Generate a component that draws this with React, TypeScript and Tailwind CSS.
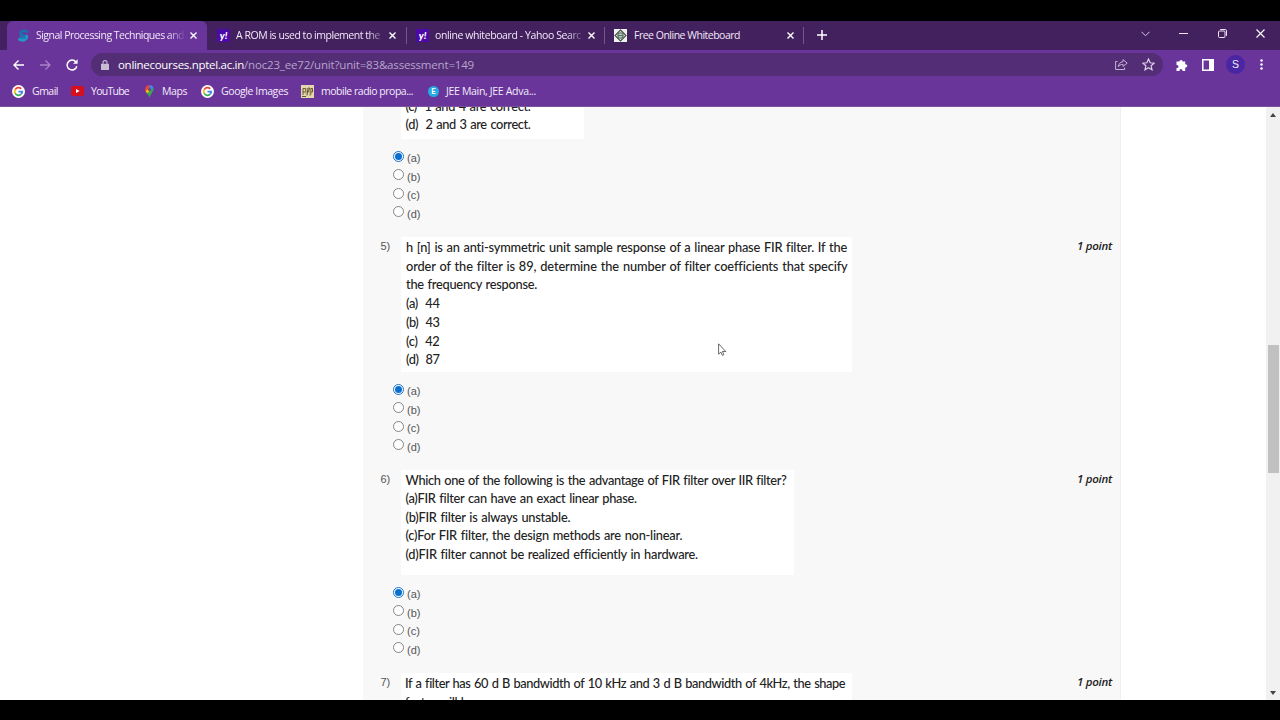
import { useLayoutEffect, useRef, useState } from "react";
import type { ReactNode } from "react";

const UI = "font-['Open_Sans','Noto_Sans',sans-serif]";

/* A single line of text whose tracking is adjusted to fill a given width. */
function Fit({ w, children, className = "" }: { w: number; children: string; className?: string }) {
  const ref = useRef<HTMLSpanElement>(null);
  const [spacing, setSpacing] = useState(0);
  useLayoutEffect(() => {
    const el = ref.current;
    if (el) {
      setSpacing((w - el.getBoundingClientRect().width) / children.length);
    }
  }, [w, children]);
  return (
    <span ref={ref} className={`inline-block whitespace-pre ${className}`} style={{ letterSpacing: `${spacing}px` }}>
      {children}
    </span>
  );
}

function Close() {
  return (
    <svg className="size-[7px] shrink-0" viewBox="0 0 7 7" stroke="#fff" strokeWidth="1.4">
      <path d="M.5.5l6 6M6.5.5l-6 6" />
    </svg>
  );
}

function YahooIcon() {
  return (
    <span className="flex size-[13px] shrink-0 items-center justify-center bg-[#4b0aa8] pb-px font-['Lato',sans-serif] text-[10px] leading-none font-black text-white italic">
      y!
    </span>
  );
}

function SwayamIcon() {
  return (
    <svg className="h-[13px] w-[13px] shrink-0" viewBox="0 0 13 13" fill="none" strokeLinecap="round">
      <path d="M10 2.600C7.500 1.300 3.600 1.800 3.600 4.400c0 2.300 4.900 1.500 5.900 4" stroke="#1e6fb0" strokeWidth="2.700" />
      <path d="M9.500 7.200c1 3-3.400 4.900-6.800 3.300" stroke="#2a97c4" strokeWidth="3" />
      <path d="M3.400 8.500c1.500.8 3.600.4 4.800 0" stroke="#1a80b8" strokeWidth="2.400" />
    </svg>
  );
}

function WhiteboardIcon() {
  return (
    <svg className="size-[13px] shrink-0" viewBox="0 0 13 13" fill="none">
      <path d="M0 0h13v13H0z" fill="#f0f2f0" />
      <path d="M6.500 1l5.500 5.500L6.500 12 1 6.500z" stroke="#3f4a43" strokeWidth="1.100" />
      <circle cx="6.500" cy="6.500" r="2.700" stroke="#5c7363" strokeWidth="1.100" fill="#b4c9b7" />
      <path d="M4 6.500h5" stroke="#5c7363" />
    </svg>
  );
}

function GoogleIcon() {
  return (
    <svg className="size-[13px] shrink-0" viewBox="0 0 13 13" fill="none" strokeWidth="1.700">
      <circle cx="6.500" cy="6.500" r="6.500" fill="#fff" />
      <path d="M3.200 4.600A3.800 3.800 0 0 1 9.200 3.800" stroke="#ea4335" />
      <path d="M3.200 8.400a3.800 3.800 0 0 1 0-3.800" stroke="#fbbc05" />
      <path d="M9.200 9.200a3.800 3.800 0 0 1-6-.8" stroke="#34a853" />
      <path d="M6.500 6.600h3.800a3.800 3.800 0 0 1-1.100 2.600" stroke="#4285f4" />
    </svg>
  );
}

function Tab({ icon, title, w, className, textClass }: { icon: ReactNode; title: string; w: number; className: string; textClass: string }) {
  return (
    <div className={`flex h-full shrink-0 items-center ${className}`}>
      {icon}
      <span className={`w-[148px] overflow-hidden ${textClass}`}>
        <Fit w={w}>{title}</Fit>
      </span>
      <Close />
    </div>
  );
}

const fade = "[mask-image:linear-gradient(to_right,#000_132px,transparent_150px)]";

function TabStrip() {
  return (
    <div className="flex h-[29px] bg-[#43215f] text-[10.500px] leading-[27px] text-[#f1e8f7]">
      <Tab icon={<SwayamIcon />} title="Signal Processing Techniques and" w={148} className="ml-[7px] w-[200px] rounded-t-[6px] bg-[#69359a] pl-[10px]" textClass={`ml-[6px] mr-[6px] ${fade}`} />
      <Tab icon={<YahooIcon />} title="A ROM is used to implement the" w={144} className="w-[199px] pl-[10px]" textClass={`ml-[6px] mr-[5px] ${fade}`} />
      <span className="mt-[6px] h-[17px] w-px bg-[#74558c]" />
      <Tab icon={<YahooIcon />} title="online whiteboard - Yahoo Searc" w={146} className="w-[197px] pl-[9px]" textClass={`ml-[6px] mr-[5px] ${fade}`} />
      <span className="mt-[6px] h-[17px] w-px bg-[#74558c]" />
      <Tab icon={<WhiteboardIcon />} title="Free Online Whiteboard" w={106} className="w-[198px] pl-[9px]" textClass="ml-[7px] mr-[5px]" />
      <span className="mt-[6px] h-[17px] w-px bg-[#74558c]" />
      <svg className="mt-[9px] ml-[13px] size-[10px]" viewBox="0 0 10 10" stroke="#fff" strokeWidth="1.500">
        <path d="M5 0v10M0 5h10" />
      </svg>
      <div className="mt-[7px] mr-[15px] ml-auto flex h-[11px] items-center">
        <svg className="mr-[29px] h-[6px] w-[9px]" viewBox="0 0 9 6" fill="none" stroke="#d9cbe3">
          <path d="M.5.800l4 4 4-4" />
        </svg>
        <span className="mr-[30px] h-px w-[9px] bg-[#eee5f3]" />
        <svg className="mr-[29px] size-[9px]" viewBox="0 0 9 9" fill="none" stroke="#eee5f3">
          <rect x=".5" y="2" width="6.500" height="6.500" rx="1" />
          <path d="M2.200.5h5a1.300 1.300 0 0 1 1.300 1.300v5" />
        </svg>
        <svg className="size-[9px]" viewBox="0 0 9 9" stroke="#fff" strokeWidth="1.100">
          <path d="M.5.500l8 8M8.500.500l-8 8" />
        </svg>
      </div>
    </div>
  );
}

function Toolbar() {
  return (
    <div className="flex h-[29px] items-center bg-[#69359a] pl-[13px]">
      <svg className="h-[10px] w-[11px]" viewBox="0 0 11 10" fill="none" stroke="#fff" strokeWidth="1.400">
        <path d="M11 5H1M5.500.5L1 5l4.500 4.500" />
      </svg>
      <svg className="ml-[16px] h-[10px] w-[11px]" viewBox="0 0 11 10" fill="none" stroke="#a884c6" strokeWidth="1.300">
        <path d="M0 5h10M5.500.5L10 5 5.500 9.500" />
      </svg>
      <svg className="ml-[15px] size-[12px]" viewBox="0 0 12 12" fill="none" stroke="#fff" strokeWidth="1.500">
        <path d="M9.900 3A4.900 4.900 0 1 0 10.800 7.200" />
        <path d="M11.600.3v4.500H7.100z" fill="#fff" stroke="none" />
      </svg>
      <div className="ml-[13px] flex h-[23px] w-[1072px] items-center rounded-full bg-[#532e76] pr-[8px] pl-[10px] text-[11.500px] leading-[22px]">
        <svg className="h-[10px] w-[8px]" viewBox="0 0 8 10">
          <path d="M0 3.800h8V10H0z" fill="#c9bbd6" />
          <path d="M2 4V2.600a2 2 0 0 1 4 0V4" fill="none" stroke="#c9bbd6" strokeWidth="1.100" />
        </svg>
        <span className="ml-[9px] flex">
          <Fit w={126} className="text-white">onlinecourses.nptel.ac.in</Fit>
          <Fit w={230} className="text-[#b9a3cd]">/noc23_ee72/unit?unit=83&assessment=149</Fit>
        </span>
        <svg className="ml-auto h-[11px] w-[13px]" viewBox="0 0 13 11" fill="none" stroke="#c5b1d5" strokeLinejoin="round">
          <path d="M2.500 2.500H.600v8h9V8.500" />
          <path d="M8 .6l4.200 3.500L8 7.400V5.400C5.600 5.300 4.300 6.200 3.400 7.800 3.600 5 5 3 8 2.700z" />
        </svg>
        <svg className="ml-[14px] size-[13px]" viewBox="0 0 12 12" fill="none" stroke="#ddd0e7" strokeWidth="1.100">
          <path d="M6 1l1.500 3.400 3.700.35-2.800 2.450.85 3.650L6 8.900l-3.250 1.950.85-3.650L.8 4.750l3.700-.35z" />
        </svg>
      </div>
      <svg className="ml-[13px] size-[12px]" viewBox="0 0 12 12" fill="#fff">
        <path d="M3.400 2.500a1.600 1.600 0 0 1 3.200 0H9.200v2.700h.5a1.600 1.600 0 0 1 0 3.200h-.5V12H6.500v-.6a1.500 1.500 0 0 0-3 0v.6H.5V8.900H1a1.500 1.500 0 0 0 0-3H.5V2.500z" />
      </svg>
      <svg className="ml-[14px] h-[12px] w-[12px]" viewBox="0 0 12 12">
        <path d="M.8.800h10.400v10.400H.8z" fill="none" stroke="#fff" strokeWidth="1.500" />
        <path d="M7 0h5v12H7z" fill="#fff" />
      </svg>
      <span className="ml-[12px] flex size-[19px] items-center justify-center rounded-full bg-[#4a26a5] font-['Liberation_Sans',sans-serif] text-[10.500px] leading-none text-[#eee]">S</span>
      <svg className="ml-[15px] h-[11px] w-[3px]" viewBox="0 0 3 11" fill="#fff">
        <circle cx="1.500" cy="1.400" r="1.250" />
        <circle cx="1.500" cy="5.500" r="1.250" />
        <circle cx="1.500" cy="9.600" r="1.250" />
      </svg>
    </div>
  );
}

function Bookmarks() {
  return (
    <div className="flex h-[28px] items-center border-b border-[#7d5299] bg-[#69359a] pb-[3px] pl-[12px] text-[10.500px] leading-[24px] text-[#f4ebf9]">
      <GoogleIcon />
      <Fit w={26} className="ml-[7px]">Gmail</Fit>
      <svg className="ml-[13px] h-[10px] w-[13px]" viewBox="0 0 13 10">
        <rect width="13" height="10" rx="2" fill="#d4101f" />
        <path d="M5 3l3.600 2L5 7z" fill="#fff" />
      </svg>
      <Fit w={38} className="ml-[7px]">YouTube</Fit>
      <svg className="ml-[16px] h-[13px] w-[9px]" viewBox="0 0 9 13">
        <path d="M.2 4A4.300 4.300 0 0 1 4.500 0v4.500L1.200 7.400A5 5 0 0 1 .2 4z" fill="#ea4335" />
        <path d="M4.500 0a4.400 4.400 0 0 1 4 3L4.500 6.500z" fill="#4285f4" />
        <path d="M8.500 2.700c1 3.300-2.500 5-4 10.300C4 11 2.800 9.400 1.900 8.300z" fill="#34a853" />
        <path d="M.6 6l3-2.500 1.700 2-3.400 3z" fill="#fbbc05" />
        <circle cx="4.500" cy="4.400" r="1.500" fill="#604582" />
      </svg>
      <Fit w={25} className="ml-[8px]">Maps</Fit>
      <span className="ml-[14px]"><GoogleIcon /></span>
      <Fit w={67} className="ml-[7px]">Google Images</Fit>
      <svg className="ml-[13px] size-[13px]" viewBox="0 0 13 13" fill="none">
        <path d="M0 0h13v13H0z" fill="#e4d7ae" />
        <path d="M2 10V3.500h2.500V7H2M6 10.500L7 3h1.500L7.500 7H6.200M9.800 10V3.500h1.700V7H9.800M1 11.500h4" stroke="#655637" />
        <path d="M5 3v6M9 5v6" stroke="#a98c4a" />
      </svg>
      <Fit w={92} className="ml-[7px]">mobile radio propa...</Fit>
      <span className="ml-[15px] flex size-[11px] items-center justify-center rounded-full bg-[#27a9e1] font-['Lato',sans-serif] text-[8px] leading-none font-bold text-white">E</span>
      <Fit w={90} className="ml-[7px]">JEE Main, JEE Adva...</Fit>
    </div>
  );
}

function Options() {
  return (
    <div className="mt-[10px] mb-[14px] ml-[30px] h-[74px] font-['Liberation_Sans',Arial,sans-serif] text-[11px] leading-[18px] text-[#555]">
      {["a", "b", "c", "d"].map((o) => (
        <label key={o} className="flex h-[18.500px]">
          <span className={`mt-[1.600px] mr-[3px] flex size-[11px] shrink-0 items-center justify-center rounded-full border bg-white ${o === "a" ? "border-[#1a73c8]" : "border-[#858585]"}`}>
            {o === "a" && <span className="size-[7px] rounded-full bg-[#0b6fce]" />}
          </span>
          <span>({o})</span>
        </label>
      ))}
    </div>
  );
}

function Question({ n, box, lines }: { n?: string; box: string; lines: [string, number][] }) {
  return (
    <div className="flex items-start">
      <span className="w-[38px] shrink-0 pl-[17.500px] font-['Liberation_Sans',Arial,sans-serif] text-[11px] leading-[18px] text-[#555]">{n}</span>
      <div className={`shrink-0 overflow-hidden bg-white font-['Lato',sans-serif] text-[12.800px] font-medium text-[#222] [word-spacing:0.8px] ${box}`}>
        {lines.map(([t, w]) => (
          <div key={t}><Fit w={w}>{t}</Fit></div>
        ))}
      </div>
      {n && <Fit w={35} className="mr-[8px] ml-auto text-[11.500px] leading-[18px] font-semibold text-[#222] italic">1 point</Fit>}
    </div>
  );
}

function Page() {
  return (
    <div className="relative flex h-[593px] overflow-hidden bg-white">
      <main className="ml-[363px] w-[758px] shrink-0 border-r border-[#f0f0f0] bg-[#f8f8f8]">
        <div className="-mt-[10px]">
          <Question box="h-[42px] w-[183px] pl-[4.500px] leading-[18px]" lines={[["(c)  1 and 4 are correct.", 125], ["(d)  2 and 3 are correct.", 125]]} />
        </div>
        <Options />
        <Question
          n="5)"
          box="h-[135px] w-[451px] pl-[5px] pt-px leading-[18.700px]"
          lines={[
            ["h [n] is an anti-symmetric unit sample response of a linear phase FIR filter. If the", 441],
            ["order of the filter is 89, determine the number of filter coefficients that specify", 440.5],
            ["the frequency response.", 131],
            ["(a)  44", 33.5],
            ["(b)  43", 33.5],
            ["(c)  42", 33.5],
            ["(d)  87", 33.5],
          ]}
        />
        <Options />
        <Question
          n="6)"
          box="h-[105px] w-[393px] pl-[4.500px] pt-[0.500px] leading-[18.500px]"
          lines={[
            ["Which one of the following is the advantage of FIR filter over IIR filter?", 380.5],
            ["(a)FIR filter can have an exact linear phase.", 231],
            ["(b)FIR filter is always unstable.", 164.5],
            ["(c)For FIR filter, the design methods are non-linear.", 276.5],
            ["(d)FIR filter cannot be realized efficiently in hardware.", 291.5],
          ]}
        />
        <Options />
        <Question
          n="7)"
          box="h-[60px] w-[451px] pl-[4px] pt-px leading-[18.500px]"
          lines={[
            ["If a filter has 60 d B bandwidth of 10 kHz and 3 d B bandwidth of 4kHz, the shape", 440],
            ["factor will be", 69],
          ]}
        />
      </main>
      <div className="ml-auto flex w-[14px] flex-col items-center bg-[#f1f1f1]">
        <svg className="mt-[6px] h-[4px] w-[6px] shrink-0" viewBox="0 0 6 4"><path d="M0 4l3-4 3 4z" fill="#444" /></svg>
        <div className="mt-[228px] h-[128px] w-[11px] shrink-0 bg-[#c1c1c1]" />
        <svg className="mt-auto mb-[5px] h-[4px] w-[6px] shrink-0" viewBox="0 0 6 4"><path d="M0 0l3 4 3-4z" fill="#444" /></svg>
      </div>
      <svg className="absolute top-[236px] left-[718px] h-[13px] w-[9px]" viewBox="0 0 9 13">
        <path d="M.6.800v10.400l2.300-2.100 1.500 3.300 1.500-.7-1.500-3.200h3.400z" fill="#fff" stroke="#444" strokeWidth=".8" />
      </svg>
    </div>
  );
}

export default function App() {
  return (
    <div className={`h-[720px] w-[1280px] overflow-hidden bg-black pt-[21px] ${UI}`}>
      <TabStrip />
      <Toolbar />
      <Bookmarks />
      <Page />
    </div>
  );
}
